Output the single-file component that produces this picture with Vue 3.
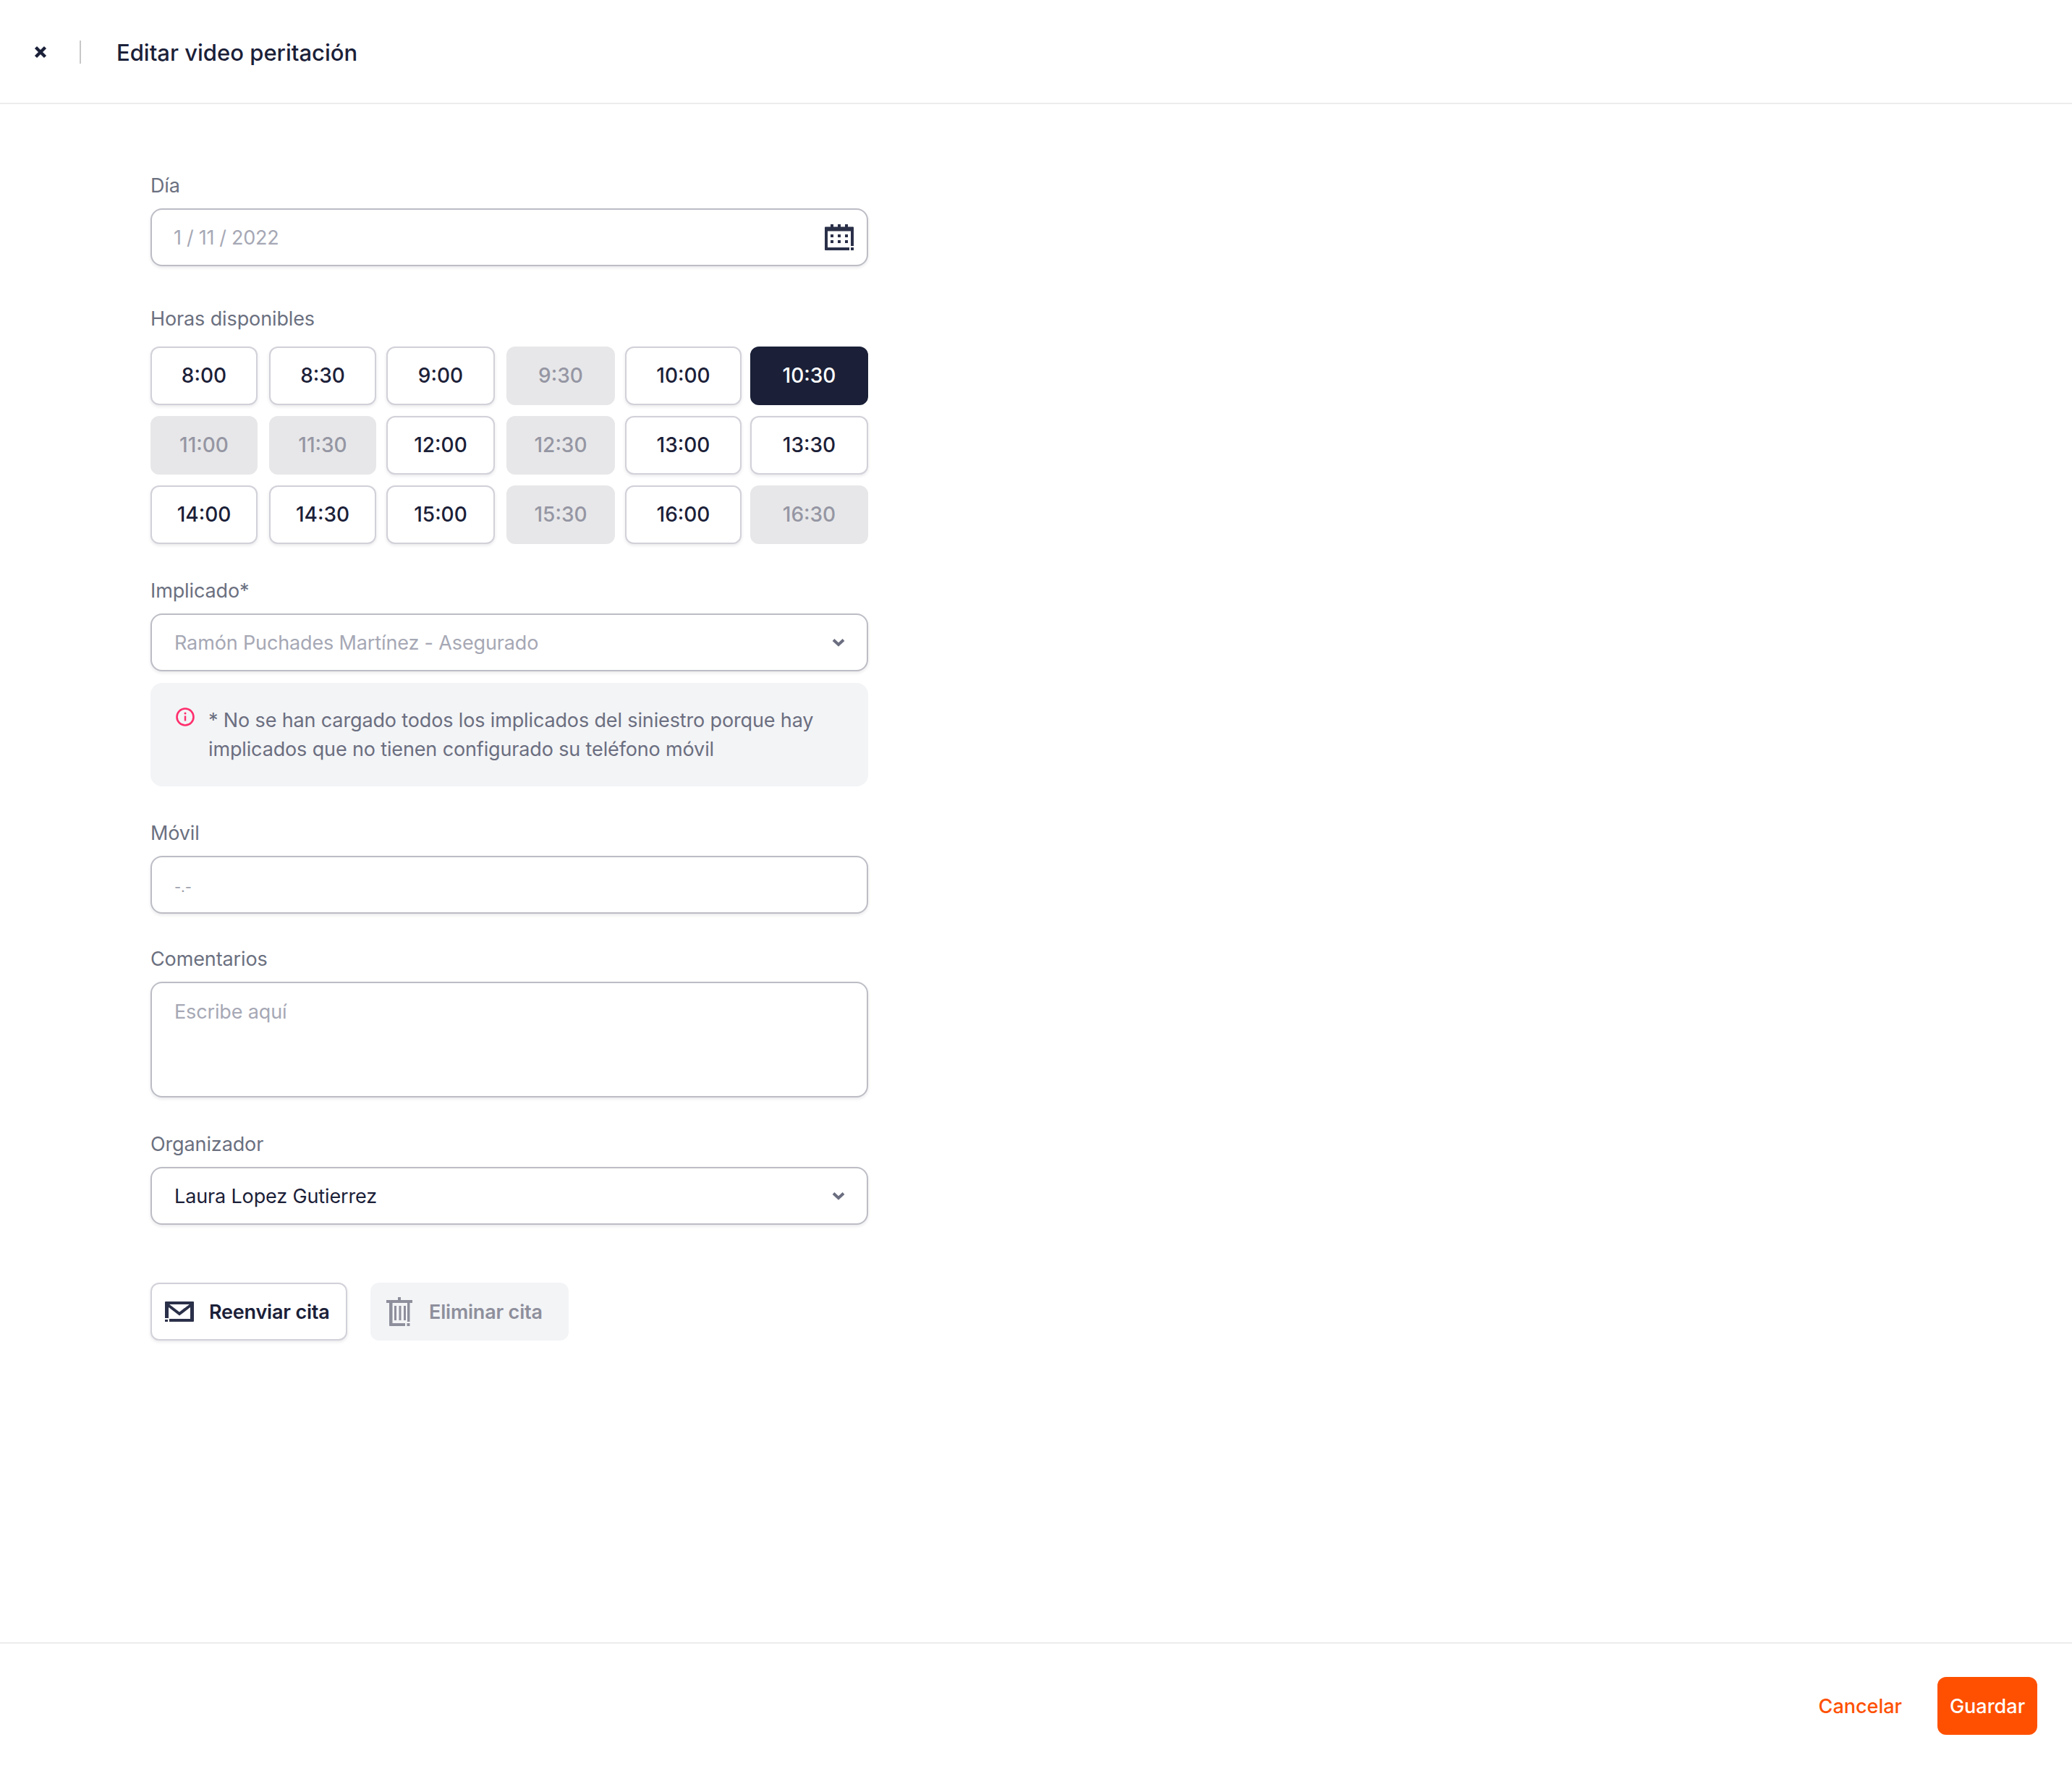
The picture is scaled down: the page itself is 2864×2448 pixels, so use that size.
<template>
  <div class="page">
    <header class="topbar">
      <button class="close" aria-label="Cerrar">
        <svg width="18" height="18" viewBox="0 0 18 18"><path d="M2.5 2.5l13 13M15.5 2.5l-13 13" stroke="#1b2038" stroke-width="4.4" fill="none"/></svg>
      </button>
      <span class="divider"></span>
      <h1>Editar video peritación</h1>
    </header>

    <main class="content">
      <form class="form" @submit.prevent>
        <label class="label">Día</label>
        <div class="control muted date">
          <span>1 / 11 / 2022</span>
          <svg class="calendar" width="40" height="36" viewBox="0 0 40 36" fill="#2b3049">
            <path d="M8 0h4v4H8zM18 0h4v4h-4zM28 0h4v4h-4z"/>
            <path d="M1 3.500h38a1 1 0 0 1 1 1V30h-4V9.500H4V32h30v4H1a1 1 0 0 1-1-1V4.500a1 1 0 0 1 1-1z"/>
            <path d="M36 32h4v4h-4zM8 14h4v4H8zM18 14h4v4h-4zM28 14h4v4h-4zM8 22h4v4H8zM18 22h4v4h-4zM28 22h4v4h-4z"/>
          </svg>
        </div>

        <label class="label hours-label">Horas disponibles</label>
        <div class="slots">
          <button
            v-for="s in slots"
            :key="s.time"
            type="button"
            class="slot"
            :class="{ off: s.off, active: s.time === selected }"
          >{{ s.time }}</button>
        </div>

        <label class="label gap">Implicado*</label>
        <div class="control muted select">
          <span>Ramón Puchades Martínez - Asegurado</span>
          <svg class="chevron" width="18" height="12" viewBox="0 0 18 12"><path d="M2 2.500l7 6.500 7-6.500" stroke="#6b6e80" stroke-width="4" fill="none"/></svg>
        </div>
        <div class="notice">
          <svg class="info" width="26" height="26" viewBox="0 0 26 26" fill="none">
            <circle cx="13" cy="13" r="11.500" stroke="#ff2e6c" stroke-width="2.600"/>
            <path d="M13 11.500v7" stroke="#ff2e6c" stroke-width="2.400"/>
            <circle cx="13" cy="8" r="1.500" fill="#ff2e6c"/>
          </svg>
          <p>* No se han cargado todos los implicados del siniestro porque hay implicados que no tienen configurado su teléfono móvil</p>
        </div>

        <label class="label gap">Móvil</label>
        <input class="control field phone" placeholder="-.-" />

        <label class="label gap comments-label">Comentarios</label>
        <textarea class="control field comments" placeholder="Escribe aquí"></textarea>

        <label class="label gap">Organizador</label>
        <div class="control select">
          <span>Laura Lopez Gutierrez</span>
          <svg class="chevron" width="18" height="12" viewBox="0 0 18 12"><path d="M2 2.500l7 6.500 7-6.500" stroke="#6b6e80" stroke-width="4" fill="none"/></svg>
        </div>

        <div class="actions">
          <button type="button" class="action resend">
            <svg width="40" height="28" viewBox="0 0 40 28" fill="#2b3049">
              <path d="M1 0h38a1 1 0 0 1 1 1v26a1 1 0 0 1-1 1H6v-4h29V4H5v19H0V1a1 1 0 0 1 1-1z"/>
              <path d="M0 25h4v3H0z"/>
              <path d="M3 4l17 13L37 4" stroke="#2b3049" stroke-width="4" fill="none"/>
            </svg>
            Reenviar cita
          </button>
          <button type="button" class="action remove">
            <svg width="36" height="40" viewBox="0 0 36 40" fill="#8e8f9c">
              <path d="M16 0h4v4h-4zM0 4h36v4H0z"/>
              <path d="M4 8h4.500v28H26v4H5a1 1 0 0 1-1-1zM29 8h3.500v26H29zM28.500 36h4v4h-4z"/>
              <path d="M11 12h3v20h-3zM17.500 12h3v20h-3zM24 12h3v20h-3z"/>
            </svg>
            Eliminar cita
          </button>
        </div>
      </form>
    </main>

    <footer class="bottombar">
      <button class="cancel">Cancelar</button>
      <button class="save">Guardar</button>
    </footer>
  </div>
</template>

<script setup>
import { ref } from "vue";

const selected = ref("10:30");

const off = ["9:30", "11:00", "11:30", "12:30", "15:30", "16:30"];
const times = [
  "8:00", "8:30", "9:00", "9:30", "10:00", "10:30",
  "11:00", "11:30", "12:00", "12:30", "13:00", "13:30",
  "14:00", "14:30", "15:00", "15:30", "16:00", "16:30",
];
const slots = times.map((time) => ({ time, off: off.includes(time) }));
</script>

<style>
body {
  margin: 0;
  background: #fff;
}
</style>

<style scoped>
* {
  box-sizing: border-box;
}

.page {
  display: flex;
  flex-direction: column;
  height: 100vh;
  font-family: Inter, "Liberation Sans", sans-serif;
  color: #1b2038;
}

button {
  font-family: inherit;
  cursor: pointer;
}

.topbar {
  display: flex;
  align-items: center;
  height: 144px;
  padding: 2px 0 0 47px;
  border-bottom: 2px solid #ececee;
}

.close {
  display: flex;
  width: 18px;
  height: 18px;
  padding: 0;
  border: 0;
  background: none;
}

.divider {
  width: 2px;
  height: 32px;
  margin-left: 45px;
  background: #c8c8c8;
}

h1 {
  margin: 2px 0 0 49px;
  font-size: 31px;
  font-weight: 500;
  line-height: 40px;
}

.content {
  flex: 1;
  padding: 96px 0 0 208px;
}

.form {
  display: flex;
  flex-direction: column;
  width: 992px;
}

.label {
  height: 32px;
  margin-bottom: 16px;
  padding-top: 1px;
  font-size: 27px;
  letter-spacing: -0.12px;
  line-height: 32px;
  color: #6b7080;
}

.gap {
  margin-top: 48px;
}

.hours-label {
  margin-top: 56px;
  margin-bottom: 23px;
}

.comments-label {
  margin-top: 46px;
}

.control {
  display: flex;
  align-items: center;
  justify-content: space-between;
  width: 100%;
  height: 80px;
  padding: 0 30px 0 31px;
  border: 2px solid #bcbdc5;
  border-radius: 16px;
  box-shadow: 0 2px 4px rgba(27, 32, 56, 0.1);
  background: #fff;
  font-family: inherit;
  font-size: 27px;
  letter-spacing: -0.14px;
  color: #1b2038;
}

.muted {
  color: #a6a8b5;
}

.date {
  padding-left: 30px;
  padding-right: 18px;
  letter-spacing: -0.3px;
}

.field {
  display: block;
  outline: none;
}

.field::placeholder {
  color: #a6a8b5;
  opacity: 1;
}

.phone::placeholder {
  font-size: 20px;
  color: #9a9ca9;
}

.comments {
  height: 160px;
  padding-top: 24px;
  resize: none;
  line-height: 32px;
}

.slots {
  display: grid;
  grid-template-columns: 164px 162px 166px 164px 173px 163px;
  row-gap: 15px;
}

.slot {
  height: 81px;
  margin-right: 16px;
  padding: 0 0 1px;
  border: 2px solid #d1d1d9;
  border-radius: 12px;
  box-shadow: 0 2px 4px rgba(27, 32, 56, 0.1);
  background: #fff;
  font-size: 28px;
  font-weight: 500;
  color: #1b2038;
}

.slot:nth-child(6n + 2),
.slot:nth-child(6n + 4) {
  margin-right: 14px;
}

.slot:nth-child(6n + 5) {
  margin-right: 12px;
}

.slot:nth-child(6n) {
  margin-right: 0;
}

.slot.off {
  border-color: #e7e7e9;
  box-shadow: none;
  background: #e7e7e9;
  color: #9596a3;
}

.slot.active {
  border-color: #1b2038;
  box-shadow: none;
  background: #1b2038;
  color: #fff;
}

.notice {
  display: flex;
  height: 143px;
  margin-top: 16px;
  padding: 34px 40px 0 35px;
  border-radius: 16px;
  background: #f3f4f6;
}

.info {
  flex-shrink: 0;
}

.notice p {
  margin: -2px 0 0 19px;
  font-size: 27px;
  letter-spacing: -0.14px;
  line-height: 40px;
  color: #6b6e80;
}

.actions {
  display: flex;
  gap: 32px;
  margin-top: 80px;
}

.action {
  display: flex;
  align-items: center;
  height: 80px;
  padding-bottom: 1px;
  border-radius: 12px;
  font-size: 27px;
  font-weight: 600;
  letter-spacing: -0.2px;
}

.resend {
  gap: 21px;
  width: 272px;
  padding-left: 18px;
  border: 2px solid #d1d1d9;
  box-shadow: 0 2px 4px rgba(27, 32, 56, 0.1);
  background: #fff;
  color: #1b2038;
}

.remove {
  gap: 23px;
  width: 274px;
  padding-left: 22px;
  border: 0;
  background: #f3f4f6;
  color: #8e8f9c;
}

.bottombar {
  display: flex;
  align-items: flex-start;
  justify-content: flex-end;
  gap: 49px;
  height: 178px;
  padding: 46px 48px 0 0;
  border-top: 2px solid #ececee;
}

.cancel {
  height: 80px;
  padding: 0;
  border: 0;
  background: none;
  font-size: 27px;
  font-weight: 500;
  color: #fe5000;
}

.save {
  width: 138px;
  height: 80px;
  padding: 0;
  border: 0;
  border-radius: 12px;
  background: #fe5000;
  font-size: 27px;
  font-weight: 500;
  color: #fff;
}
</style>
